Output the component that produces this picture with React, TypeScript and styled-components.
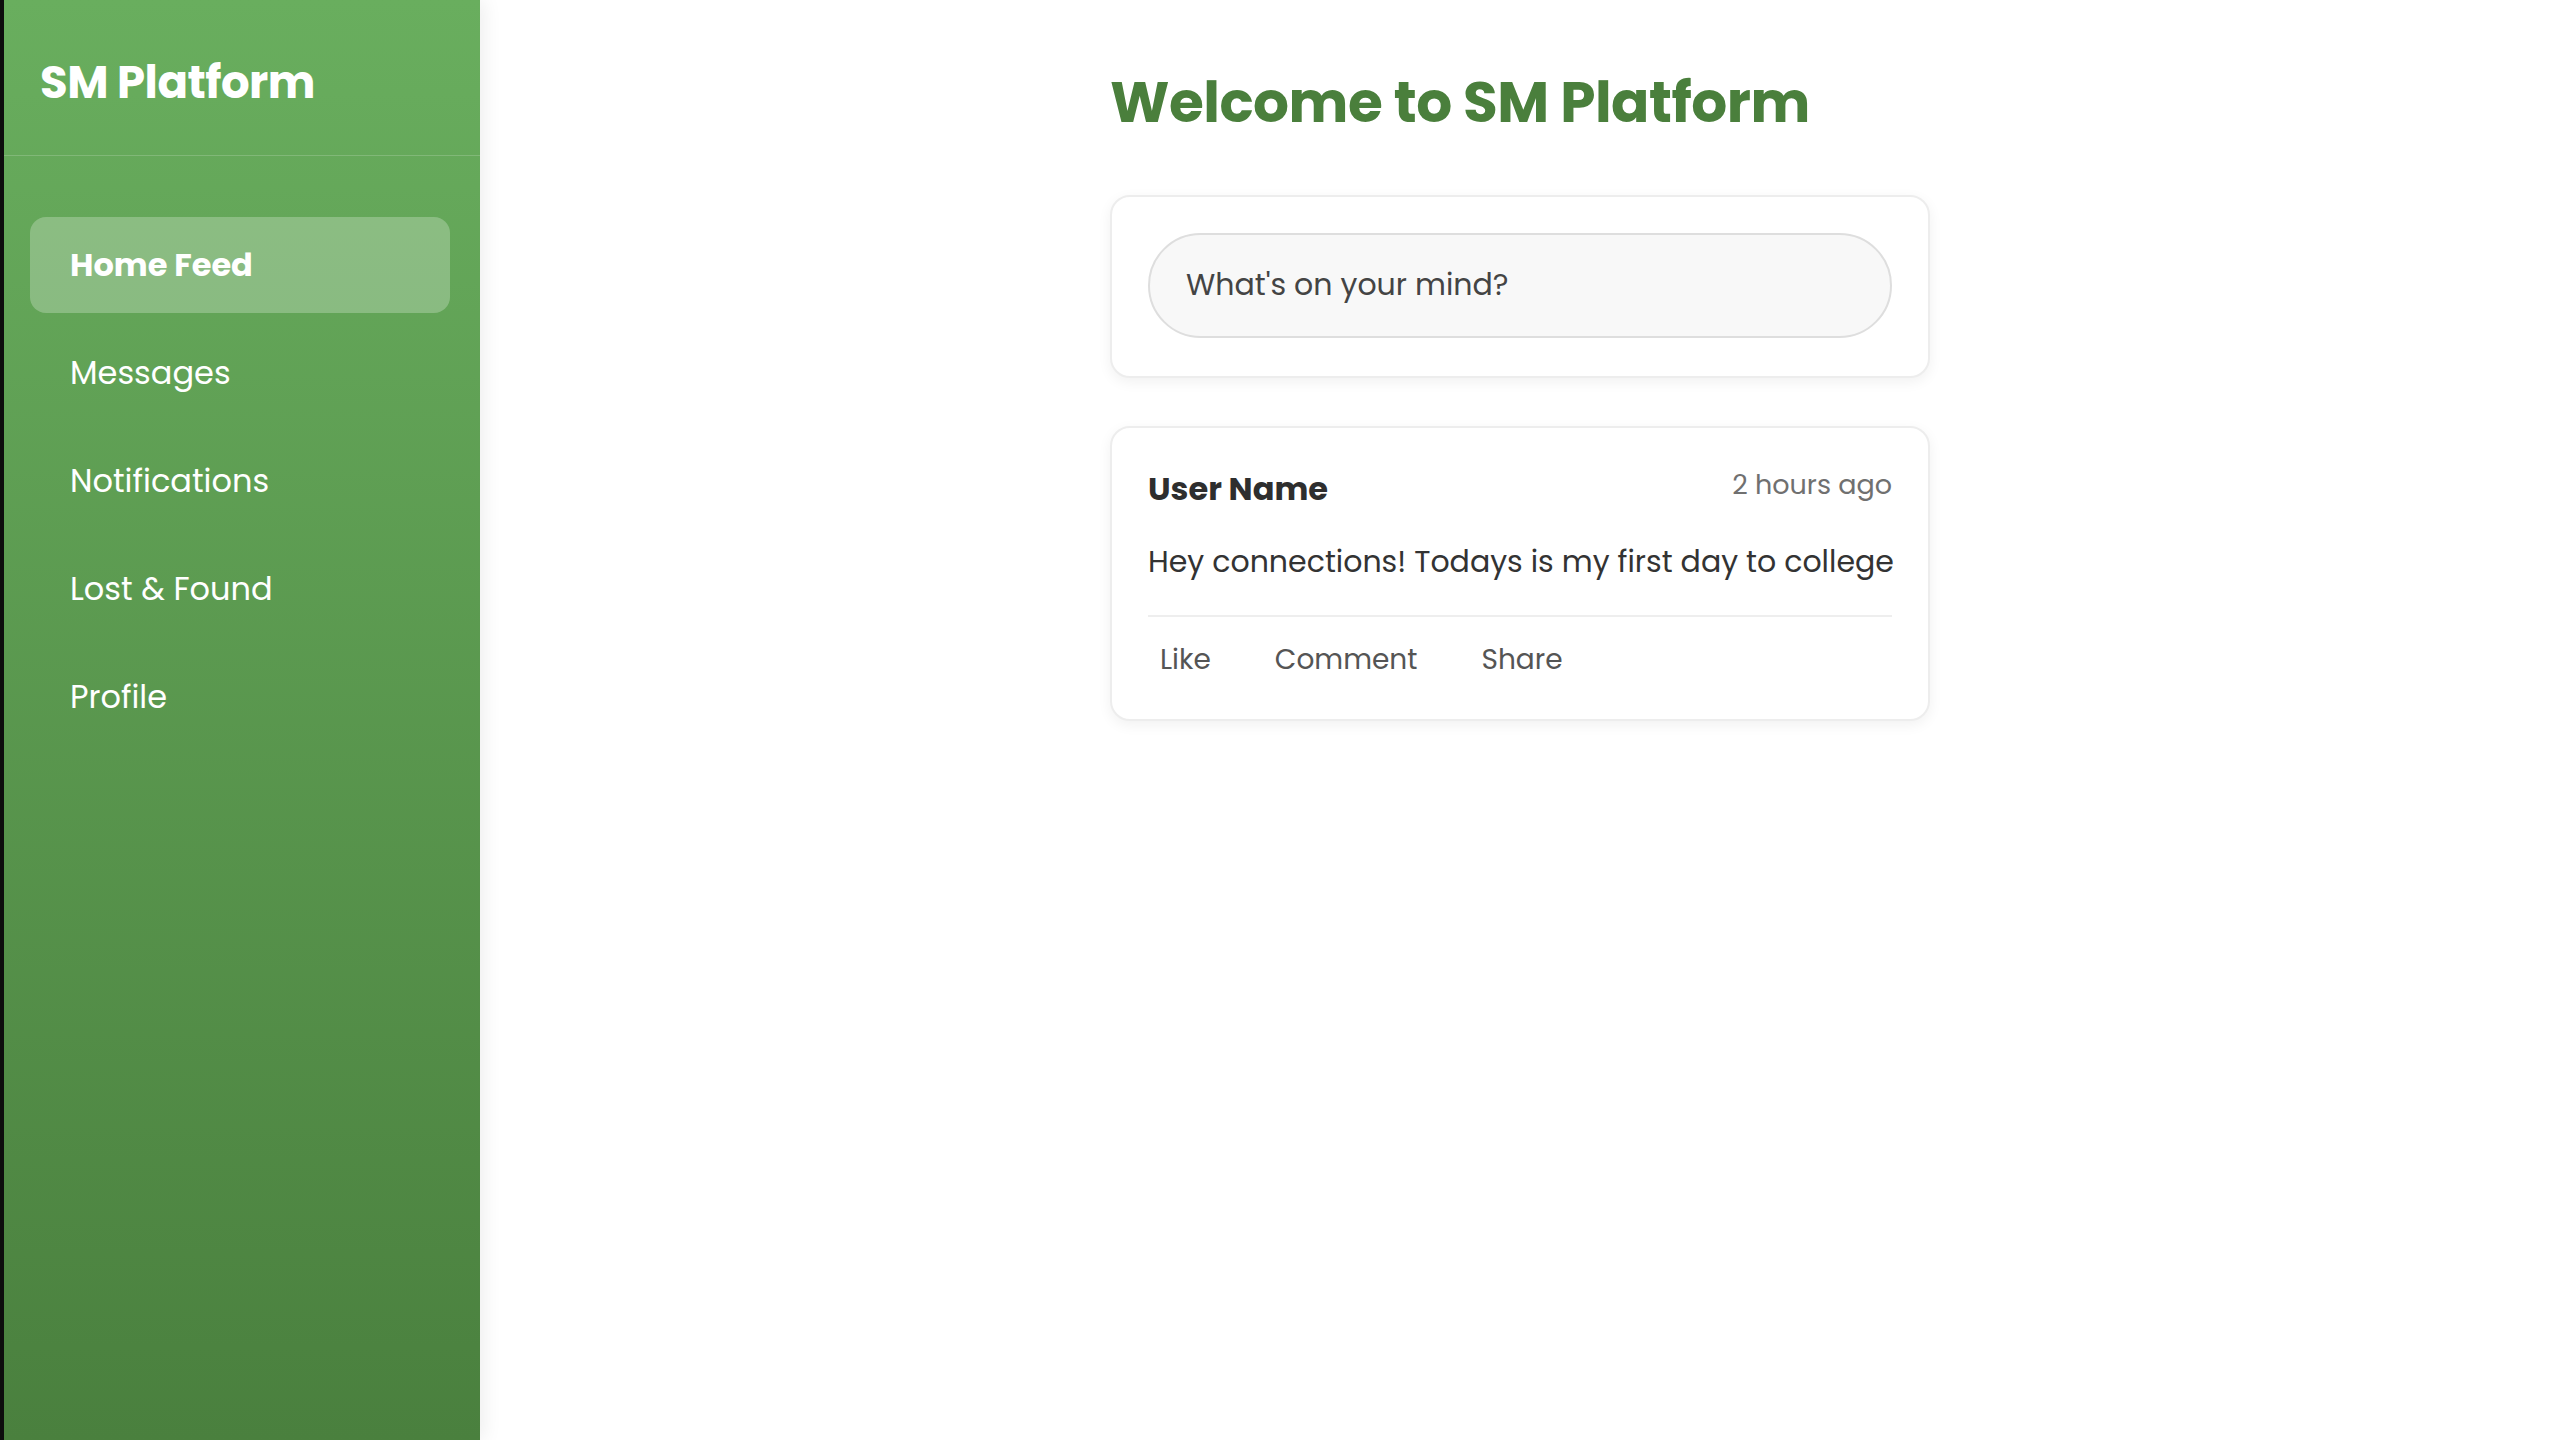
import React from "react";
import styled, { createGlobalStyle } from "styled-components";

const Global = createGlobalStyle`
  * { box-sizing: border-box; }
  html, body { margin: 0; padding: 0; background: #ffffff; }
  body { font-family: Poppins, "Open Sans", "Liberation Sans", sans-serif; }
`;

const Layout = styled.div`
  display: flex;
  min-height: 1440px;
`;

const Sidebar = styled.aside`
  width: 480px;
  flex-shrink: 0;
  border-left: 4px solid #0d0d0d;
  background: linear-gradient(180deg, #69ae5e 0%, #4a803e 100%);
  box-shadow: 4px 0 18px rgba(0, 0, 0, 0.07);
  display: flex;
  flex-direction: column;
  position: relative;
  z-index: 1;
`;

const Brand = styled.div`
  height: 156px;
  display: flex;
  align-items: center;
  padding: 10px 0 0 36px;
  border-bottom: 1px solid rgba(255, 255, 255, 0.18);
  color: #ffffff;
  font-size: 45px;
  font-weight: 700;
  letter-spacing: -0.5px;
`;

const Nav = styled.nav`
  display: flex;
  flex-direction: column;
  gap: 12px;
  padding: 61px 30px 0 26px;
`;

const NavItem = styled.a<{ $active?: boolean }>`
  height: 96px;
  display: flex;
  align-items: center;
  padding: 0 40px;
  border-radius: 16px;
  color: #ffffff;
  font-size: 32px;
  font-weight: ${(p) => (p.$active ? 700 : 400)};
  background: ${(p) => (p.$active ? "rgba(255,255,255,0.25)" : "transparent")};
  text-decoration: none;
  cursor: pointer;
`;

const Main = styled.main`
  flex: 1;
  display: flex;
  justify-content: center;
  padding-top: 69px;
`;

const Column = styled.div`
  width: 820px;
  display: flex;
  flex-direction: column;
`;

const Heading = styled.h1`
  margin: 0 0 58px 0;
  color: #4a7f3c;
  font-size: 56.5px;
  font-weight: 700;
  line-height: 1.2;
  letter-spacing: -0.5px;
`;

const Card = styled.section`
  background: #ffffff;
  border: 2px solid #ededed;
  border-radius: 20px;
  box-shadow: 0 4px 14px rgba(0, 0, 0, 0.06);
  padding: 36px 36px 38px;
  margin-bottom: 48px;
`;

const Composer = styled.input`
  width: 100%;
  height: 105px;
  border: 2px solid #dedede;
  border-radius: 53px;
  background: #f8f8f8;
  padding: 0 36px;
  font-family: inherit;
  font-size: 30px;
  color: #333;
  outline: none;
  &::placeholder { color: #444; }
`;

const PostHeader = styled.div`
  display: flex;
  justify-content: space-between;
  align-items: flex-start;
  margin-top: 1px;
`;

const Author = styled.span`
  font-size: 32px;
  font-weight: 700;
  color: #2e2e2e;
`;

const Time = styled.span`
  font-size: 27px;
  color: #707070;
`;

const PostText = styled.p`
  margin: 26px 0 0 0;
  font-size: 30px;
  color: #333;
  white-space: nowrap;
`;

const Actions = styled.div`
  display: flex;
  gap: 40px;
  border-top: 2px solid #eeeeee;
  margin-top: 30px;
  padding-top: 22px;
`;

const Action = styled.button`
  background: none;
  border: none;
  padding: 0 12px;
  font-family: inherit;
  font-size: 28px;
  color: #555;
  cursor: pointer;
`;

export default function App() {
  const items = ["Home Feed", "Messages", "Notifications", "Lost & Found", "Profile"];
  return (
    <>
      <Global />
      <Layout>
        <Sidebar>
          <Brand>SM Platform</Brand>
          <Nav>
            {items.map((it, i) => (
              <NavItem key={it} $active={i === 0}>
                {it}
              </NavItem>
            ))}
          </Nav>
        </Sidebar>
        <Main>
          <Column>
            <Heading>Welcome to SM Platform</Heading>
            <Card>
              <Composer placeholder="What's on your mind?" />
            </Card>
            <Card>
              <PostHeader>
                <Author>User Name</Author>
                <Time>2 hours ago</Time>
              </PostHeader>
              <PostText>Hey connections! Todays is my first day to college</PostText>
              <Actions>
                <Action>Like</Action>
                <Action>Comment</Action>
                <Action>Share</Action>
              </Actions>
            </Card>
          </Column>
        </Main>
      </Layout>
    </>
  );
}
